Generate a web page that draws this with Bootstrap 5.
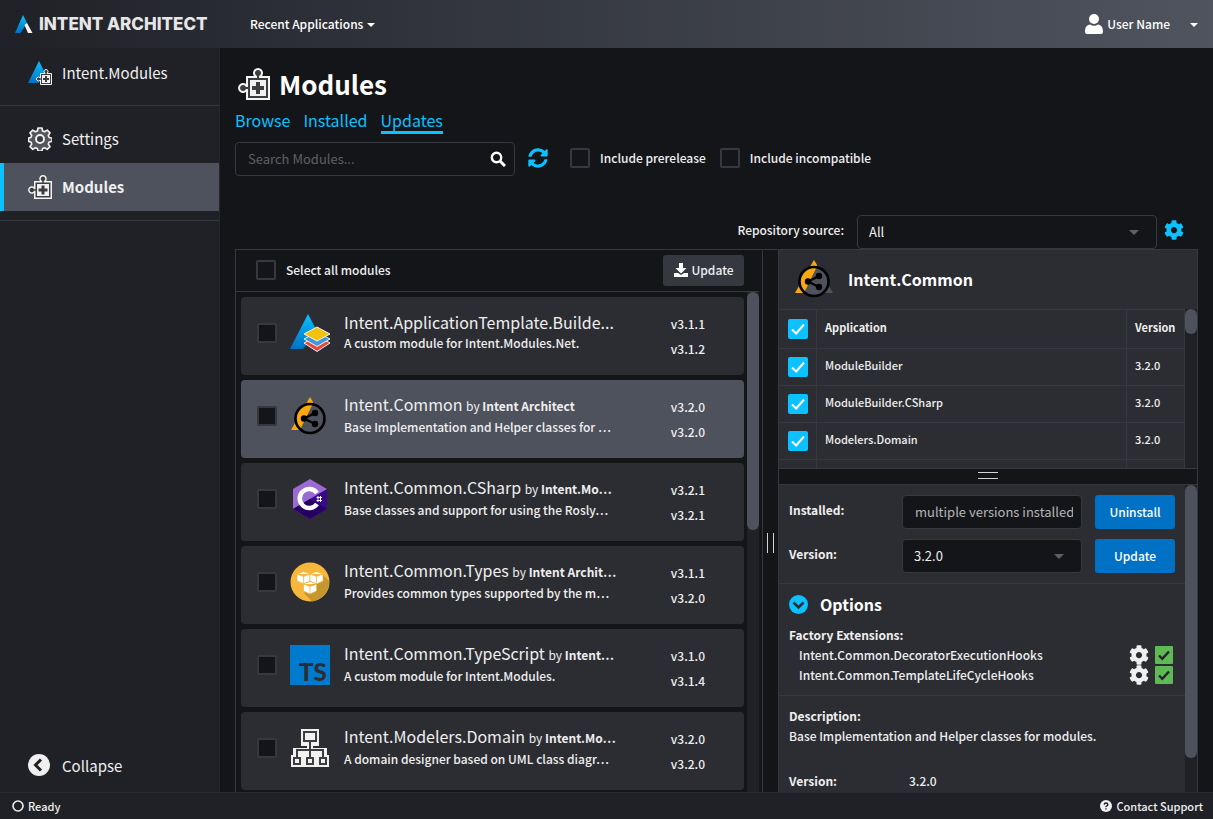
<!DOCTYPE html>
<html lang="en" data-bs-theme="dark">
<head>
<meta charset="utf-8">
<meta name="viewport" content="width=device-width, initial-scale=1">
<title>Intent Architect – Modules</title>
<link href="https://cdn.jsdelivr.net/npm/bootstrap@5.3.0/dist/css/bootstrap.min.css" rel="stylesheet">
<style>
:root{--ink:#efeff0;--page:#141519;--panel:#2c2d32;--side:#202126;--line:#36383f;--accent:#0bc1ff;--active:#4e525d;--action:#0071c5}
body{font-family:"Noto Sans CJK SC","Noto Sans",sans-serif;font-size:12px;font-weight:500;line-height:20px;color:var(--ink);background:var(--page)}
button,input,select{font-family:inherit;font-weight:inherit}
.topbar{height:48px;background:linear-gradient(90deg,#202126 0%,#30333c 33%,#50545e 100%);padding:0 15px}
.brand{color:#e6e6e8;font-family:Inter,sans-serif;font-weight:800;font-size:17px;width:223px;gap:6px}
.topbar .btn{color:#fff;font-size:12px;font-weight:500;line-height:20px;border:0}
.topbar .dropdown-toggle::after{border-width:4px 4px 0;vertical-align:2px;margin-left:4px}
.sidebar{width:220px;background:var(--side);border-right:1px solid #24262b}
.side-link{height:48px;padding-left:28px;gap:10px;font-size:15px;font-weight:400;color:var(--ink);text-decoration:none;border:0;background:none;width:100%}
.side-link.current{background:var(--active);box-shadow:inset 4px 0 var(--accent);font-weight:700}
.side-app{height:58px;padding-bottom:8px;border-bottom:1px solid var(--line);margin-bottom:9px}
.side-link.side-foot{height:50px;padding-bottom:3px}
.side-end{margin-top:9px;border-top:1px solid var(--line)}
.workspace{padding:19px 15px 0}
.page-head{padding-left:3px;gap:9px}
.page-title{font-size:26px;line-height:33px;font-weight:700;margin:0}
.tabs{gap:13px;margin:10px 0 8px}
.tabs a{color:var(--accent);text-decoration:none;font-size:16px;font-weight:400;line-height:20px;padding-bottom:1px;border-bottom:3px solid transparent}
.tabs a.current{border-color:var(--accent)}
.search-box{width:280px;height:34px;border:1px solid var(--line);border-radius:4px;padding:0 8px 0 12px}
.search-box input{background:none;border:0;outline:0;color:var(--ink);font-size:13px;font-weight:400;padding:0}
.search-box input::placeholder{color:#5f6064;opacity:1}
.filters{padding-bottom:2px}
.refresh{margin:0 22px 0 13px}
.opt-label{margin:0 14px 0 10px}
.icon-btn{background:none;border:0;padding:0;color:inherit;display:flex}
.tick{appearance:none;width:20px;height:20px;border:2px solid #36383f;border-radius:2px;background:#141519;margin:0;flex:none;display:block}
.tick:checked{border:0;background:#0bc1ff url("data:image/svg+xml,%3Csvg xmlns='http://www.w3.org/2000/svg' viewBox='0 0 20 20'%3E%3Cpath d='M4 10.5l4.200 4L16 5.500' fill='none' stroke='%23fff' stroke-width='2'/%3E%3C/svg%3E")}
.pick{appearance:none;height:34px;border:1px solid var(--line);border-radius:4px;color:var(--ink);font-size:13px;font-weight:400;padding:0 11px;background:#141519 url("data:image/svg+xml,%3Csvg xmlns='http://www.w3.org/2000/svg' viewBox='0 0 10 5'%3E%3Cpath d='M0 0h10L5 5z' fill='%23606165'/%3E%3C/svg%3E") no-repeat right 17px center/10px 5px}
.repo-pick{width:300px}
.repo-row{margin-top:39px;padding-right:14px}
.repo-row label{margin-right:13px;padding-bottom:4px}
.repo-row .icon-btn{margin-left:7px;padding-bottom:4px;color:var(--accent)}
.split{border-top:1px solid var(--line)}
.list-pane{width:528px;border-left:1px solid var(--line);border-right:1px solid var(--line)}
.list-head{height:42px;border-bottom:1px solid var(--line);margin-right:3px;padding:0 15px 1px 20px}
.list-head label{margin-left:10px}
.btn-quiet{background:#36383f;color:var(--ink);height:31px;width:81px;font-size:12px;line-height:18px;border:0;border-radius:3px;padding:0}
.modules{padding:5px 3px 0 5px;gap:5px}
.list-track{margin-right:3px}
.module{height:78px;flex:none;background:var(--panel);border-radius:4px;padding:0 39px 6px 16px}
.module.current{background:var(--active)}
.module .tick{margin-right:13px}
.module-text{margin-left:14px;padding-bottom:2px;white-space:nowrap}
.module-name{font-size:16px;font-weight:400;line-height:22px}
.module-name small{font-size:12px}
.versions{line-height:25px;margin-top:6px}
.track{width:12px;background:var(--side);flex:none}
.thumb{background:var(--active);border-radius:6px}
.thumb-list{height:238px}.thumb-table{height:25px}.thumb-detail{height:273px}
.grip-col{width:15px;padding-top:44px}
.grip-col span{width:7px;height:20px;border:solid #d5d5d7;border-width:0 1px}
.grip-row{height:17px;background:var(--page);border:solid var(--line);border-width:1px 0;padding-bottom:2px}
.grip-row span{width:20px;height:7px;border:solid #d5d5d7;border-width:1px 0}
.detail-pane{background:var(--panel);border:solid var(--line);border-width:0 1px}
.detail-head{height:59px;padding:0 0 2px 15px;gap:14px}
.detail-head h2{font-size:16px;line-height:24px;font-weight:700;margin:0}
.apps{height:159px}
.apps table{width:100%;font-size:11px;line-height:18px;border-collapse:collapse}
.apps td,.apps th{border:1px solid var(--line);height:37px;padding:0 8px 4px}
.apps th{height:39px}
.apps tr>:first-child{width:37px;border-left:0;padding:0 8px 0 9px}
.apps tr>:last-child{width:58px}
.block{border-bottom:1px solid var(--line);padding:10px}
.fields{gap:10px}
.field-label{width:113px;flex:none;font-weight:700;padding-top:5px}
.field{width:180px;height:34px}
.readonly-field{background:#141519;border:1px solid var(--line);border-radius:4px;color:#b5b5b8;padding:0 8px 2px 12px;font-size:13px;font-weight:400}
.btn-action{background:var(--action);color:#fff;width:80px;height:34px;border:0;border-radius:3px;font-size:12px;padding:0}
.block h3{font-size:16px;line-height:20px;font-weight:700;margin:0}
.options-head{gap:12px;margin-bottom:11px}
.hook{padding:0 2px 0 10px}
.hook svg+svg{margin-left:6px}
.describe{padding:10px}
.version-row{margin-top:25px}
.version-label{width:120px}
.statusbar{height:27px;background:var(--side);border-top:1px solid #2a2c31;font-size:11px;padding:0 10px 1px 12px}
.statusbar a{color:var(--ink);text-decoration:none}
</style>
</head>
<body class="vh-100 d-flex flex-column overflow-hidden">
<svg class="position-absolute" width="0" height="0" aria-hidden="true">
  <linearGradient id="blue" x1="0" y1="0" x2="0" y2="1"><stop offset="0" stop-color="#0bc1ff"/><stop offset="1" stop-color="#0071c5"/></linearGradient>
  <symbol id="puzzle" viewBox="0 0 32 32"><path d="M9 9H18V8.500A4 4 0 1 1 22 8.500V9H31V31H9V22H8.500A4 4 0 1 1 8.500 18H9Z" fill="#3c3c3c" stroke="#f4f4f5" stroke-width="2"/><path d="M12 12H28V28H12Z" fill="#f0f0f4"/><path d="M18 14h4v4h4v4h-4v4h-4v-4h-4v-4h4z" fill="#3c3c3c"/></symbol>
  <symbol id="cog" viewBox="0 0 512 512"><path fill="currentColor" d="M487.400 315.700l-42.600-24.600c4.300-23.200 4.300-47 0-70.200l42.600-24.600c4.900-2.800 7.100-8.600 5.500-14-11.100-35.600-30-67.800-54.700-94.600-3.800-4.100-10-5.100-14.800-2.300L380.800 110c-17.900-15.400-38.500-27.300-60.800-35.100V25.800c0-5.600-3.900-10.500-9.400-11.700-36.700-8.200-74.300-7.800-109.200 0-5.500 1.200-9.400 6.100-9.400 11.700V75c-22.200 7.900-42.800 19.800-60.800 35.100L88.700 85.500c-4.900-2.800-11-1.900-14.800 2.300-24.700 26.700-43.600 58.900-54.700 94.600-1.700 5.400.6 11.200 5.500 14L67.300 221c-4.300 23.200-4.300 47 0 70.200l-42.600 24.600c-4.900 2.800-7.100 8.600-5.500 14 11.100 35.600 30 67.800 54.700 94.600 3.800 4.100 10 5.100 14.800 2.300l42.600-24.600c17.900 15.400 38.500 27.300 60.800 35.100v49.200c0 5.600 3.900 10.500 9.400 11.700 36.700 8.200 74.300 7.800 109.200 0 5.500-1.200 9.400-6.100 9.400-11.700v-49.200c22.200-7.900 42.800-19.800 60.800-35.100l42.600 24.600c4.900 2.800 11 1.900 14.800-2.300 24.700-26.700 43.600-58.900 54.700-94.600 1.500-5.500-.7-11.300-5.600-14.100zM256 336c-44.100 0-80-35.900-80-80s35.900-80 80-80 80 35.900 80 80-35.900 80-80 80z"/></symbol>
  <symbol id="share" viewBox="0 0 40 40"><path d="M20 1L39 34H1Z" fill="#4e525d"/><path d="M20 1L23 6L15 34H1Z" fill="#fba70f"/><circle cx="20" cy="22.500" r="15" fill="#4e525d"/><path d="M22.500 8.500L10 34A15 15 0 0 1 20 8Z" fill="#fba70f"/><circle cx="20" cy="22.500" r="14.500" fill="none" stroke="#000" stroke-width="2.600"/><path d="M25 17L14 22.500L25 28" fill="none" stroke="#000" stroke-width="2.200"/><g fill="#000"><circle cx="25" cy="17" r="3.200"/><circle cx="14" cy="22.500" r="3.200"/><circle cx="25" cy="28" r="3.200"/></g></symbol>
  <symbol id="greentick" viewBox="0 0 18 18"><rect width="18" height="18" rx="1" fill="#5fb955"/><path d="M4 9.500l3.300 3.300L14 5.500" fill="none" stroke="#222429" stroke-width="2.400"/></symbol>
</svg>

<header class="topbar d-flex align-items-center flex-shrink-0">
  <a href="#" class="brand d-flex align-items-center text-decoration-none text-nowrap">
    <svg width="18" height="18" viewBox="0 0 18 18"><path d="M8 0L12 8L5.500 18H0Z" fill="url(#blue)"/><path d="M9.500 10L12 8L17.500 18H13Z" fill="#f5f5f5"/></svg>INTENT ARCHITECT</a>
  <button class="btn dropdown-toggle">Recent Applications</button>
  <button class="btn p-0 ms-auto d-flex align-items-center"><svg width="18" height="20" viewBox="0 0 18 20" class="me-1" fill="#fff"><circle cx="9" cy="5" r="5"/><path d="M0 18C0 13 2 11 5 10.500Q9 13 13 10.500C16 11 18 13 18 18Q18 20 16 20H2Q0 20 0 18Z"/></svg>User Name</button>
  <button class="btn p-0 ms-3 dropdown-toggle" aria-label="User menu"></button>
</header>

<div class="d-flex flex-grow-1 overflow-hidden">
  <nav class="sidebar d-flex flex-column flex-shrink-0">
    <a href="#" class="side-link side-app d-flex align-items-center"><svg width="24" height="24" viewBox="0 0 24 24"><path d="M11 0L18 14L10 22H0Z" fill="url(#blue)"/><use href="#puzzle" x="8" y="8" width="16" height="16"/></svg>Intent.Modules</a>
    <a href="#" class="side-link d-flex align-items-center"><svg width="24" height="24" viewBox="0 0 24 24" fill="none"><path d="M10 1h4l.6 3 2 .8 2.600-1.700 2.800 2.800-1.700 2.600.8 2 3 .6v3.300l-3 .6-.8 2 1.700 2.600-2.800 2.800-2.600-1.700-2 .8-.6 2.500h-4l-.6-2.500-2-.8-2.600 1.700-2.800-2.800 1.700-2.600-.8-2-2.400-.6v-3.300l2.400-.6.8-2L2 5.900l2.800-2.800 2.600 1.700 2-.8z" fill="#55565a" stroke="#efeff0" stroke-width="1.700" stroke-linejoin="round"/><circle cx="12" cy="12" r="4" fill="#3c3c40" stroke="#efeff0" stroke-width="2"/></svg>Settings</a>
    <a href="#" class="side-link current d-flex align-items-center"><svg width="24" height="24"><use href="#puzzle"/></svg>Modules</a>
    <div class="side-end"></div>
    <button class="side-link side-foot d-flex align-items-center mt-auto"><svg width="24" height="24" viewBox="0 0 24 24"><circle cx="11" cy="11" r="11" fill="#efeff0"/><path d="M13 5.500L7.500 11L13 16.500" fill="none" stroke="#202126" stroke-width="3"/></svg>Collapse</button>
  </nav>

  <main class="workspace d-flex flex-column flex-grow-1 overflow-hidden">
    <div class="page-head d-flex align-items-center"><svg width="32" height="32"><use href="#puzzle"/></svg><h1 class="page-title">Modules</h1></div>
    <nav class="tabs d-flex"><a href="#">Browse</a><a href="#">Installed</a><a href="#" class="current">Updates</a></nav>
    <div class="d-flex">
      <div class="search-box d-flex align-items-center"><input class="flex-grow-1" type="search" placeholder="Search Modules..." aria-label="Search modules"><button class="icon-btn" aria-label="Search"><svg width="16" height="16" viewBox="0 0 16 16" fill="none" stroke="#fff"><circle cx="6.500" cy="6.500" r="4.700" stroke-width="2.400"/><path d="M10 10L15 15" stroke-width="3"/></svg></button></div>
      <div class="filters d-flex align-items-center">
      <button class="icon-btn refresh" aria-label="Refresh"><svg width="20" height="20" viewBox="0 0 512 512" fill="#0bc1ff"><path d="M370.700 133.300C339.500 104 298.900 88 255.800 88c-77.500.1-144.300 53.200-162.800 126.900-1.300 5.400-6.100 9.100-11.700 9.100H24.100c-7.500 0-13.200-6.800-11.800-14.200C33.900 94.900 134.800 8 256 8c66.400 0 126.800 26.100 171.300 68.700L463 41c15.100-15.100 41-4.400 41 17v134c0 13.300-10.700 24-24 24H346c-21.400 0-32.100-25.900-17-41l41.700-41.700zM32 296h134c21.400 0 32.100 25.900 17 41l-41.800 41.800c31.300 29.300 71.800 45.300 114.900 45.300 77.400-.1 144.300-53.100 162.800-126.800 1.300-5.400 6.100-9.100 11.700-9.100h57.300c7.500 0 13.200 6.800 11.800 14.200C478.100 417.100 377.200 504 256 504c-66.400 0-126.800-26.100-171.300-68.700L49 471c-15.100 15.100-41 4.400-41-17V320c0-13.300 10.700-24 24-24z"/></svg></button>
      <input class="tick" type="checkbox" id="pre"><label class="opt-label" for="pre">Include prerelease</label>
      <input class="tick" type="checkbox" id="inc"><label class="opt-label" for="inc">Include incompatible</label>
      </div>
    </div>
    <div class="repo-row d-flex align-items-center justify-content-end">
      <label for="repo">Repository source:</label>
      <select id="repo" class="pick repo-pick"><option>All</option></select>
      <button class="icon-btn" aria-label="Repository settings"><svg width="20" height="20"><use href="#cog"/></svg></button>
    </div>

    <div class="split d-flex flex-grow-1 overflow-hidden">
      <section class="list-pane d-flex flex-column flex-shrink-0">
        <div class="list-head d-flex align-items-center flex-shrink-0">
          <input class="tick" type="checkbox" id="all"><label for="all">Select all modules</label>
          <button class="btn-quiet ms-auto d-flex align-items-center justify-content-center gap-1"><svg width="14" height="14" viewBox="0 0 14 14" fill="#fff"><path d="M5 0h4v5h3.500L7 10.500 1.500 5H5z"/><path d="M0 10h4l3 2 3-2h4v4H0z"/></svg>Update</button>
        </div>
        <div class="d-flex flex-grow-1 overflow-hidden">
          <div class="modules d-flex flex-column flex-grow-1">
            <article class="module d-flex align-items-center"><input class="tick" type="checkbox" aria-label="Select Intent.ApplicationTemplate.Builder">
              <svg width="40" height="40" viewBox="0 0 40 40"><path d="M18 1L27 18L13 36H0Z" fill="url(#blue)"/><path d="M14 30l13-7 13 7-13 8.500z" fill="#e9473c" stroke="#f3f3f3"/><path d="M14 26l13-7 13 7-13 7.500z" fill="#3f97dd" stroke="#f3f3f3"/><path d="M14 21l13-7 13 7-13 7z" fill="#f4c20d" stroke="#f3f3f3"/></svg>
              <div class="module-text"><div class="module-name">Intent.ApplicationTemplate.Builde...</div><div>A custom module for Intent.Modules.Net.</div></div><div class="versions ms-auto">v3.1.1<br>v3.1.2</div></article>
            <article class="module current d-flex align-items-center"><input class="tick" type="checkbox" aria-label="Select Intent.Common">
              <svg width="40" height="40"><use href="#share"/></svg>
              <div class="module-text"><div class="module-name">Intent.Common <small>by <b>Intent Architect</b></small></div><div>Base Implementation and Helper classes for …</div></div><div class="versions ms-auto">v3.2.0<br>v3.2.0</div></article>
            <article class="module d-flex align-items-center"><input class="tick" type="checkbox" aria-label="Select Intent.Common.CSharp">
              <svg width="40" height="40" viewBox="0 0 40 40"><path d="M20 0L37 10V30L20 40L3 30V10Z" fill="#9b6bd3"/><path d="M37 10V30L20 40L3 30Z" fill="#38098a"/><path d="M3 30L20 40L37 30L20 20Z" fill="#260063"/><path d="M27 14A9.500 9.500 0 1 0 27 25" fill="none" stroke="#fff" stroke-width="4.500"/><path d="M28 17v6M30.500 17v6M26.500 18.500h5.500M26.500 21.500h5.500" stroke="#fff" stroke-width="1"/></svg>
              <div class="module-text"><div class="module-name">Intent.Common.CSharp <small>by <b>Intent.Mo…</b></small></div><div>Base classes and support for using the Rosly…</div></div><div class="versions ms-auto">v3.2.1<br>v3.2.1</div></article>
            <article class="module d-flex align-items-center"><input class="tick" type="checkbox" aria-label="Select Intent.Common.Types">
              <svg width="40" height="40" viewBox="0 0 40 40"><circle cx="20" cy="20" r="19.500" fill="#f6b73c"/><path d="M33 13L39 19A19.500 19.500 0 0 1 22 39.500L14 31Z" fill="#c6972f"/><g fill="#fff" stroke="#f0b23c" stroke-width=".7"><path id="cube" d="M7 12L13.500 9.500L20 12V19L13.500 22L7 19ZM7 12L13.500 14.500L20 12M13.500 14.500V22"/><use href="#cube" x="13"/><use href="#cube" x="6.500" y="10"/></g></svg>
              <div class="module-text"><div class="module-name">Intent.Common.Types <small>by <b>Intent Archit…</b></small></div><div>Provides common types supported by the m…</div></div><div class="versions ms-auto">v3.1.1<br>v3.2.0</div></article>
            <article class="module d-flex align-items-center"><input class="tick" type="checkbox" aria-label="Select Intent.Common.TypeScript">
              <svg width="40" height="40" viewBox="0 0 40 40"><rect width="40" height="40" fill="#007acc"/><text x="9" y="36" font-family="Lato,sans-serif" font-size="24" font-weight="900" fill="#2c2d32">TS</text></svg>
              <div class="module-text"><div class="module-name">Intent.Common.TypeScript <small>by <b>Intent…</b></small></div><div>A custom module for Intent.Modules.</div></div><div class="versions ms-auto">v3.1.0<br>v3.1.4</div></article>
            <article class="module d-flex align-items-center"><input class="tick" type="checkbox" aria-label="Select Intent.Modelers.Domain">
              <svg width="40" height="40" viewBox="0 0 40 40"><path d="M11 1H29V18H23V20H37V27H39V39H1V27H3V20H17V18H11Z" fill="#f1f1f1"/><g fill="none" stroke="#3e3e40" stroke-width="2"><path d="M14 4H26V13H14ZM20 13V29M7 29V22H33V29"/><path d="M4 30h6v6H4zM17 30h6v6h-6zM30 30h6v6h-6z"/></g></svg>
              <div class="module-text"><div class="module-name">Intent.Modelers.Domain <small>by <b>Intent.Mo…</b></small></div><div>A domain designer based on UML class diagr…</div></div><div class="versions ms-auto">v3.2.0<br>v3.2.0</div></article>
          </div>
          <div class="track list-track"><div class="thumb thumb-list"></div></div>
        </div>
      </section>
      <div class="grip-col d-flex align-items-center justify-content-center flex-shrink-0"><span></span></div>
      <section class="detail-pane d-flex flex-column flex-grow-1 overflow-hidden">
        <div class="detail-head d-flex align-items-center flex-shrink-0"><svg width="40" height="40"><use href="#share"/></svg><h2>Intent.Common</h2></div>
        <div class="apps d-flex flex-shrink-0 overflow-hidden">
          <div class="flex-grow-1"><table>
            <tr><th><input class="tick" type="checkbox" checked aria-label="All applications"></th><th>Application</th><th>Version</th></tr>
            <tr><td><input class="tick" type="checkbox" checked aria-label="ModuleBuilder"></td><td>ModuleBuilder</td><td>3.2.0</td></tr>
            <tr><td><input class="tick" type="checkbox" checked aria-label="ModuleBuilder.CSharp"></td><td>ModuleBuilder.CSharp</td><td>3.2.0</td></tr>
            <tr><td><input class="tick" type="checkbox" checked aria-label="Modelers.Domain"></td><td>Modelers.Domain</td><td>3.2.0</td></tr>
            <tr><td></td><td></td><td></td></tr>
          </table></div>
          <div class="track"><div class="thumb thumb-table"></div></div>
        </div>
        <div class="grip-row d-flex align-items-center justify-content-center flex-shrink-0"><span></span></div>
        <div class="d-flex flex-grow-1 overflow-hidden">
          <div class="flex-grow-1">
            <div class="block d-flex flex-column fields">
              <div class="d-flex"><label class="field-label" for="installed">Installed:</label><input id="installed" class="field readonly-field" readonly value="multiple versions installed"><button class="btn-action ms-auto">Uninstall</button></div>
              <div class="d-flex"><label class="field-label" for="version">Version:</label><select id="version" class="field pick"><option>3.2.0</option></select><button class="btn-action ms-auto">Update</button></div>
            </div>
            <div class="block">
              <div class="options-head d-flex align-items-center"><button class="icon-btn" aria-label="Collapse options"><svg width="19" height="19" viewBox="0 0 19 19"><circle cx="9.500" cy="9.500" r="9.500" fill="#0bc1ff"/><path d="M4.500 7.500L9.500 12.500L14.500 7.500" fill="none" stroke="#2c2d32" stroke-width="2.600"/></svg></button><h3>Options</h3></div>
              <div class="fw-bold">Factory Extensions:</div>
              <div class="hook d-flex align-items-center">Intent.Common.DecoratorExecutionHooks<svg class="ms-auto" width="20" height="20"><use href="#cog"/></svg><svg width="18" height="18"><use href="#greentick"/></svg></div>
              <div class="hook d-flex align-items-center">Intent.Common.TemplateLifeCycleHooks<svg class="ms-auto" width="20" height="20"><use href="#cog"/></svg><svg width="18" height="18"><use href="#greentick"/></svg></div>
            </div>
            <div class="describe"><div class="fw-bold">Description:</div><div>Base Implementation and Helper classes for modules.</div>
              <div class="d-flex version-row"><div class="version-label fw-bold">Version:</div><div>3.2.0</div></div></div>
          </div>
          <div class="track"><div class="thumb thumb-detail"></div></div>
        </div>
      </section>
    </div>
  </main>
</div>
<footer class="statusbar d-flex align-items-center flex-shrink-0">
  <svg width="12" height="12" viewBox="0 0 12 12" class="me-1"><circle cx="6" cy="6" r="5" fill="none" stroke="#efeff0" stroke-width="1.600"/></svg>Ready
  <a href="#" class="ms-auto d-flex align-items-center"><svg width="12" height="12" viewBox="0 0 12 12" class="me-1"><circle cx="6" cy="6" r="6" fill="#efeff0"/><path d="M4.200 4.800Q4.300 3 6 3T7.800 4.600Q7.800 5.500 6.800 5.900T6 7.200M6 8.200V9.500" fill="none" stroke="#202126" stroke-width="1.400"/></svg>Contact Support</a>
</footer>
<script src="https://cdn.jsdelivr.net/npm/bootstrap@5.3.0/dist/js/bootstrap.bundle.min.js"></script>
</body>
</html>
